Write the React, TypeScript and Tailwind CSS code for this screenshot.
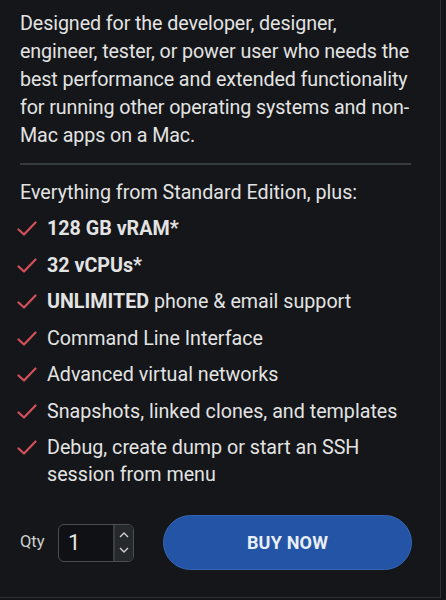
import React from "react";

const Check = () => (
  <svg width="20" height="16" viewBox="0 0 20 16" className="shrink-0 mt-[6px]" fill="none">
    <path d="M1.5 8.5 L7 13.5 L18.5 1.5" stroke="#d4505b" strokeWidth="2.2" strokeLinecap="round" strokeLinejoin="round" />
  </svg>
);

const items: React.ReactNode[] = [
  <b className="font-bold">128 GB vRAM*</b>,
  <b className="font-bold">32 vCPUs*</b>,
  <>
    <b className="font-bold">UNLIMITED</b> phone &amp; email support
  </>,
  "Command Line Interface",
  "Advanced virtual networks",
  "Snapshots, linked clones, and templates",
  "Debug, create dump or start an SSH session from menu",
];

export default function App() {
  return (
    <div className="w-[446px] h-[600px] overflow-hidden bg-[#121417]" style={{ fontFamily: "Roboto, 'Liberation Sans', sans-serif" }}>
      <div className="w-[441px] h-[598px] border-r border-b border-[#2c2f33] bg-[#141619] pl-[20px] pr-[28px] flex flex-col overflow-hidden">
        <p className="text-[19.7px] leading-[28px] text-[#e3e3e3] pt-[10px] tracking-[-0.1px]">
          Designed for the developer, designer, engineer, tester, or power user who needs the best performance and extended functionality for running other operating systems and non-Mac apps on a Mac.
        </p>
        <div className="h-[2px] bg-[#363b3f] mt-[13px] mr-[1px]" />
        <p className="text-[19.7px] leading-[27px] text-[#e3e3e3] mt-[14px]">Everything from Standard Edition, plus:</p>
        <ul className="flex flex-col gap-[9.5px] mt-[9px]">
          {items.map((it, i) => (
            <li key={i} className="flex items-start gap-[10px] -ml-[3px] text-[19.7px] leading-[27px] text-[#e3e3e3]">
              <Check />
              <span>{it}</span>
            </li>
          ))}
        </ul>
        <div className="flex items-center mt-[27px]">
          <span className="text-[16.5px] text-[#cfcfcf] w-[38px]">Qty</span>
          <div className="flex w-[76px] h-[38px] rounded-[6px] border border-[#4a4d51] bg-[#0f1114] overflow-hidden">
            <span className="flex-1 flex items-center pl-[9px] text-[22px] text-[#e6e6e6]">1</span>
            <div className="w-[20px] bg-[#26292c] border-l-2 border-[#3a3d41] flex flex-col items-center justify-center gap-[9px]">
              <svg width="10" height="6" viewBox="0 0 10 6" fill="none"><path d="M1 5 L5 1 L9 5" stroke="#cfcfcf" strokeWidth="1.4" /></svg>
              <svg width="10" height="6" viewBox="0 0 10 6" fill="none"><path d="M1 1 L5 5 L9 1" stroke="#cfcfcf" strokeWidth="1.4" /></svg>
            </div>
          </div>
          <button className="ml-[29px] w-[249px] h-[55px] rounded-full bg-[#2354a5] border border-[#3565b4] text-[#e9eef7] text-[18px] font-bold tracking-[0.2px]">
            BUY NOW
          </button>
        </div>
      </div>
    </div>
  );
}
